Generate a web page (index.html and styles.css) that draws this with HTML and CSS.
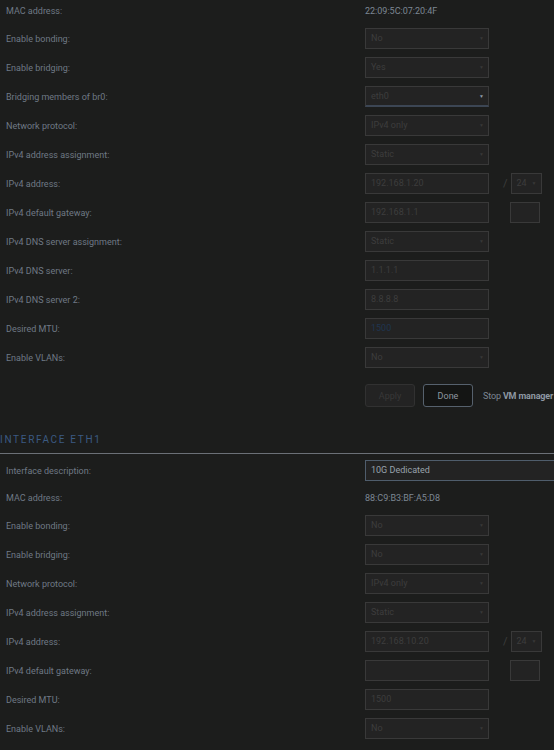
FILE: index.html
```html
<!DOCTYPE html>
<html lang="en">
<head>
    <meta charset="UTF-8">
    <meta name="viewport" content="width=device-width, initial-scale=1.0">
    <title>Network Settings</title>
    <link rel="stylesheet" href="styles.css">
</head>
<body>
    <div class="page">
        <div class="section">
            <div class="row text-row">
                <div class="label">MAC address:</div>
                <div class="value">22:09:5C:07:20:4F</div>
            </div>
            <div class="row">
                <div class="label">Enable bonding:</div>
                <div class="select">No<span class="caret">&#9660;</span></div>
            </div>
            <div class="row">
                <div class="label">Enable bridging:</div>
                <div class="select">Yes<span class="caret">&#9660;</span></div>
            </div>
            <div class="row">
                <div class="label">Bridging members of br0:</div>
                <div class="select multi">eth0<span class="caret">&#9660;</span></div>
            </div>
            <div class="row">
                <div class="label">Network protocol:</div>
                <div class="select">IPv4 only<span class="caret">&#9660;</span></div>
            </div>
            <div class="row">
                <div class="label">IPv4 address assignment:</div>
                <div class="select">Static<span class="caret">&#9660;</span></div>
            </div>
            <div class="row">
                <div class="label">IPv4 address:</div>
                <div class="input">192.168.1.20</div>
                <div class="extra">
                    <span class="slash">/</span>
                    <div class="select mask">24<span class="caret">&#9660;</span></div>
                </div>
            </div>
            <div class="row">
                <div class="label">IPv4 default gateway:</div>
                <div class="input">192.168.1.1</div>
                <div class="extra">
                    <div class="input metric"></div>
                </div>
            </div>
            <div class="row">
                <div class="label">IPv4 DNS server assignment:</div>
                <div class="select">Static<span class="caret">&#9660;</span></div>
            </div>
            <div class="row">
                <div class="label">IPv4 DNS server:</div>
                <div class="input">1.1.1.1</div>
            </div>
            <div class="row">
                <div class="label">IPv4 DNS server 2:</div>
                <div class="input">8.8.8.8</div>
            </div>
            <div class="row">
                <div class="label">Desired MTU:</div>
                <div class="input placeholder">1500</div>
            </div>
            <div class="row">
                <div class="label">Enable VLANs:</div>
                <div class="select">No<span class="caret">&#9660;</span></div>
            </div>
            <div class="buttons">
                <button class="btn" disabled>Apply</button>
                <button class="btn done">Done</button>
                <span class="note">Stop <b>VM manager</b></span>
            </div>
        </div>

        <h3 class="title">Interface eth1</h3>

        <div class="section second">
            <div class="row">
                <div class="label">Interface description:</div>
                <div class="input wide">10G Dedicated</div>
            </div>
            <div class="row text-row">
                <div class="label">MAC address:</div>
                <div class="value">88:C9:B3:BF:A5:D8</div>
            </div>
            <div class="row">
                <div class="label">Enable bonding:</div>
                <div class="select">No<span class="caret">&#9660;</span></div>
            </div>
            <div class="row">
                <div class="label">Enable bridging:</div>
                <div class="select">No<span class="caret">&#9660;</span></div>
            </div>
            <div class="row">
                <div class="label">Network protocol:</div>
                <div class="select">IPv4 only<span class="caret">&#9660;</span></div>
            </div>
            <div class="row">
                <div class="label">IPv4 address assignment:</div>
                <div class="select">Static<span class="caret">&#9660;</span></div>
            </div>
            <div class="row">
                <div class="label">IPv4 address:</div>
                <div class="input">192.168.10.20</div>
                <div class="extra">
                    <span class="slash">/</span>
                    <div class="select mask">24<span class="caret">&#9660;</span></div>
                </div>
            </div>
            <div class="row">
                <div class="label">IPv4 default gateway:</div>
                <div class="input"></div>
                <div class="extra">
                    <div class="input metric"></div>
                </div>
            </div>
            <div class="row">
                <div class="label">Desired MTU:</div>
                <div class="input">1500</div>
            </div>
            <div class="row">
                <div class="label">Enable VLANs:</div>
                <div class="select">No<span class="caret">&#9660;</span></div>
            </div>
        </div>
    </div>
</body>
</html>
```

FILE: styles.css
```css
body {
    margin: 0;
    background-color: #1c1d1c;
    font-family: Roboto, "Liberation Sans", sans-serif;
    font-size: 9px;
    color: #6f7985;
    overflow: hidden;
}
.page {
    margin-top: -2px;
    width: 554px;
}
.section {
    padding-left: 6px;
}
.section.second {
    padding-top: 2px;
}
.row {
    display: grid;
    grid-template-columns: 359px 124px auto;
    align-items: center;
    height: 29px;
    white-space: nowrap;
}
.text-row {
    height: 26px;
}
.value {
    color: #7d8793;
}
.select, .input {
    box-sizing: border-box;
    height: 21px;
    line-height: 19px;
    padding: 0 5px;
    background-color: #232323;
    border: 1px solid #393939;
    color: #3d3d3d;
    position: relative;
}
.caret {
    position: absolute;
    right: 4px;
    top: 0;
    font-size: 5px;
    color: #383838;
}
.select.multi {
    border-bottom: 2px solid #3c4654;
}
.select.multi .caret {
    color: #8e9aa8;
}
.input.placeholder {
    color: #1f3550;
}
.input.wide {
    width: 260px;
    border-color: #4f5d6c;
    color: #99a2ac;
}
.extra {
    display: flex;
    align-items: center;
    padding-left: 14px;
}
.slash {
    color: #3d3d3d;
    font-size: 11px;
    margin-right: 3px;
}
.select.mask {
    width: 31px;
}
.input.metric {
    width: 30px;
    margin-left: 7px;
}
.buttons {
    display: flex;
    align-items: center;
    padding-left: 359px;
    margin-top: 12px;
    white-space: nowrap;
}
.btn {
    flex-shrink: 0;
    box-sizing: border-box;
    width: 50px;
    height: 23px;
    font-family: inherit;
    font-size: 9px;
    border-radius: 3px;
    background-color: #232323;
    border: 1px solid #313131;
    color: #383838;
    padding: 0;
}
.btn.done {
    margin-left: 8px;
    background-color: #141514;
    border-color: #56616d;
    color: #8e97a1;
}
.note {
    margin-left: 10px;
    letter-spacing: -0.15px;
    color: #7d8793;
}
.note b {
    color: #8e98a3;
}
.title {
    margin: 20px 0 0;
    height: 26px;
    line-height: 26px;
    font-size: 10px;
    font-weight: normal;
    letter-spacing: 1.7px;
    text-transform: uppercase;
    color: #3b5a82;
    border-bottom: 1px solid #6b7077;
}
```
